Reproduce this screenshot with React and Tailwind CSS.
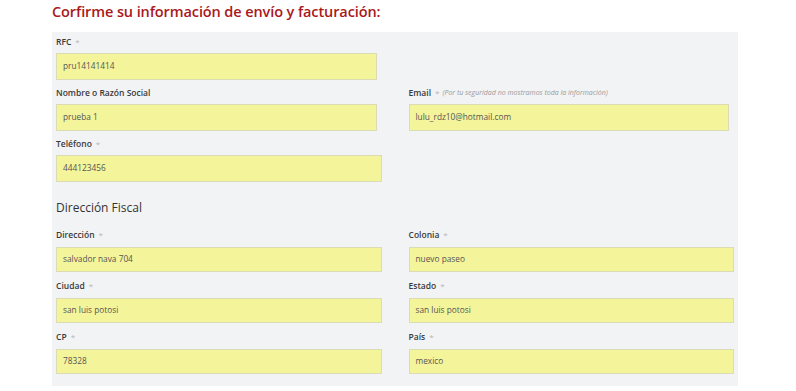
import React from "react";

const font = { fontFamily: '"Open Sans", "Liberation Sans", sans-serif' };

function Field({ label, value, note, narrow, tight, noStar }) {
  return (
    <div className={tight ? "mb-[7px]" : "mb-[6px]"}>
      <div className={`flex h-[14px] items-center text-[8.5px] font-semibold text-[#3a3a3a] ${tight ? "mb-[5px]" : "mb-[4px]"}`}>
        <span>{label}</span>
        {!noStar && <span className="ml-[4px] text-[8px] font-normal text-[#b5b5b5]">*</span>}
        {note && (
          <span className="ml-[3px] text-[7px] font-normal italic text-[#9a9a9a]">{note}</span>
        )}
      </div>
      <div
        className={`flex items-center border border-[#dcdcb4] bg-[#f4f49a] pl-[6px] text-[8.3px] text-[#555] ${tight ? "h-[25px]" : "h-[27px]"} ${narrow ? "mr-[5px]" : ""}`}
      >
        {value}
      </div>
    </div>
  );
}

export default function App() {
  return (
    <div className="h-[391px] w-[796px] bg-white" style={font}>
      <div className="pl-[52px]">
        <h1 className="h-[32px] pt-[1px] text-[14.5px] font-semibold leading-[22px] tracking-[-0.1px] text-[#a8181c]">
          Corfirme su información de envío y facturación:
        </h1>

        {/* Panel */}
        <div className="w-[686px] bg-[#f2f3f5] px-[4px] pb-[5px] pt-[3px]">
          <div className="grid grid-cols-2 gap-x-[27px]">
            <Field label="RFC" value="pru14141414" narrow />
            <div />
            <Field label="Nombre o Razón Social" value="prueba 1" narrow noStar />
            <Field
              label="Email"
              value="lulu_rdz10@hotmail.com"
              note="(Por tu seguridad no mostramos toda la información)"
              narrow
            />
            <Field label="Teléfono" value="444123456" />
            <div />
          </div>

          <h2 className="mb-[10px] mt-[10px] h-[20px] text-[12px] leading-[20px] text-[#333]">
            Dirección Fiscal
          </h2>

          <div className="grid grid-cols-2 gap-x-[27px]">
            <Field label="Dirección" value="salvador nava 704" tight />
            <Field label="Colonia" value="nuevo paseo" tight />
            <Field label="Ciudad" value="san luis potosi" tight />
            <Field label="Estado" value="san luis potosi" tight />
            <Field label="CP" value="78328" tight />
            <Field label="País" value="mexico" tight />
          </div>
        </div>
      </div>
    </div>
  );
}
